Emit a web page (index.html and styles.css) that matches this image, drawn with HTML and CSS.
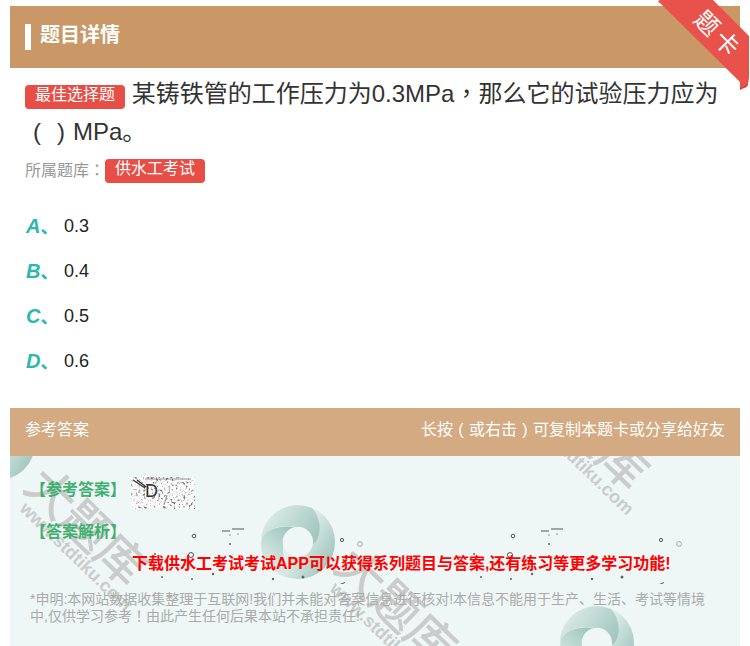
FILE: index.html
```html
<!DOCTYPE html>
<html lang="zh-CN">
<head>
<meta charset="utf-8">
<title>题目详情</title>
<link rel="stylesheet" href="styles.css">
</head>
<body>
<svg class="defs" width="0" height="0" aria-hidden="true">
  <defs>
    <linearGradient id="ringBase" x1="0" y1="0" x2="1" y2="0.6">
      <stop offset="0" stop-color="#eef7f5"/>
      <stop offset="0.55" stop-color="#e3f0ed"/>
      <stop offset="1" stop-color="#a5c9c1"/>
    </linearGradient>
    <linearGradient id="ringTop" x1="0" y1="0.2" x2="1" y2="0.7">
      <stop offset="0" stop-color="#e0eeeb"/>
      <stop offset="1" stop-color="#a2c6be"/>
    </linearGradient>
    <linearGradient id="ringLeft" x1="0.9" y1="0" x2="0.3" y2="1">
      <stop offset="0" stop-color="#9cc3ba"/>
      <stop offset="1" stop-color="#e3f1ee"/>
    </linearGradient>
    <symbol id="ring" viewBox="-38 -38 76 76">
      <path fill="url(#ringBase)" fill-rule="evenodd" d="M0-37A37 37 0 1 1 0 37A37 37 0 1 1 0-37ZM0-15A15 15 0 1 0 0 15A15 15 0 1 0 0-15Z"/>
      <path fill="url(#ringTop)" d="M-37-3A37 37 0 0 1 14-34C24-24 24-4 15 2A15 15 0 0 0-2-15C-16-18-30-14-37-3Z"/>
      <path fill="url(#ringLeft)" d="M-3-15C-18-17-31-13-36-4C-40 12-31 28-12 35C-15 28-15 16-15 3A15 15 0 0 1-3-15Z"/>
    </symbol>
    <symbol id="specks" viewBox="0 0 220 60">
      <g fill="none" stroke="#555" stroke-width="1">
        <circle cx="42" cy="12" r="1.8"/>
        <circle cx="39" cy="31" r="2.5"/>
        <circle cx="190" cy="16" r="1.6"/>
        <circle cx="208" cy="20" r="2.4" stroke="#aaa"/>
        <path d="M70 7h8M80 5h12" stroke="#555"/>
        <path d="M78 10v2M86 9v2" stroke="#999"/>
      </g>
      <g fill="#666">
        <circle cx="78" cy="20" r="1"/>
        <circle cx="3" cy="30" r="1"/>
        <circle cx="78" cy="32" r="1"/>
        <circle cx="10" cy="53" r="1"/>
        <circle cx="40" cy="55" r="1"/>
        <circle cx="61" cy="50" r="1.2"/>
        <circle cx="121" cy="55" r="1.2"/>
        <circle cx="151" cy="53" r="1.5"/>
        <path d="M188 60l5-2v1l-4 2z"/>
      </g>
    </symbol>
    <filter id="grain" x="0" y="0" width="100%" height="100%">
      <feTurbulence type="fractalNoise" baseFrequency="0.4" numOctaves="2" seed="7"/>
      <feColorMatrix type="matrix" values="0 0 0 0 0.2  0 0 0 0 0.2  0 0 0 0 0.2  3.2 3.2 0 0 -3.4"/>
    </filter>
  </defs>
</svg>

<main class="page">
  <section class="detail">
    <header class="detail-head">
      <span class="head-bar"></span>
      <h1 class="head-title">题目详情</h1>
    </header>
    <div class="question">
      <p class="question-text"><span class="tag tag-inline">最佳选择题</span> 某铸铁管的工作压力为0.3MPa<span class="punct" lang="zh-TW">，</span>那么它的试验压力应为<span class="paren">(</span><span class="paren">)</span>MPa。</p>
      <p class="bank"><span class="bank-label">所属题库<span class="punct" lang="zh-TW">：</span></span><span class="tag tag-bank">供水工考试</span></p>
    </div>
    <ul class="options">
      <li class="option"><b class="option-key">A<span class="option-mark">、</span></b><span>0.3</span></li>
      <li class="option"><b class="option-key">B<span class="option-mark">、</span></b><span>0.4</span></li>
      <li class="option"><b class="option-key">C<span class="option-mark">、</span></b><span>0.5</span></li>
      <li class="option"><b class="option-key">D<span class="option-mark">、</span></b><span>0.6</span></li>
    </ul>
  </section>

  <section class="answer">
    <div class="answer-head">
      <span>参考答案</span>
      <span>长按<span class="paren">(</span>或右击<span class="paren">)</span>可复制本题卡或分享给好友</span>
    </div>
    <div class="answer-panel">
      <svg class="ring ring-a"><use href="#ring"/></svg>
      <svg class="ring ring-b"><use href="#ring"/></svg>
      <svg class="ring ring-c"><use href="#ring"/></svg>
      <svg class="specks specks-a"><use href="#specks"/></svg>
      <svg class="specks specks-b"><use href="#specks"/></svg>
      <div class="mark mark-a"><div class="mark-big">大题库</div><div class="mark-url">www.stdtiku.com</div></div>
      <div class="mark mark-b"><div class="mark-big">大题库</div><div class="mark-url">www.stdtiku.com</div></div>
      <div class="mark mark-c"><div class="mark-big">大题库</div><div class="mark-url">www.stdtiku.com</div></div>

      <div class="answer-content">
        <div class="answer-row">
          <strong class="answer-label answer-label-first">【参考答案】</strong>
          <div class="answer-value">
            <svg class="answer-grain" width="64" height="32" viewBox="0 0 64 32" aria-hidden="true">
              <rect width="64" height="32" fill="#fafafa"/>
              <rect width="64" height="32" filter="url(#grain)"/>
              <path d="M2 3L14 11M6 3L15 10" stroke="#333" stroke-width="1.2"/>
              <path d="M36 18L33 28M14 2H60" stroke="#666" stroke-width="0.7"/>
            </svg>
            <span class="answer-letter">D</span>
          </div>
        </div>
        <strong class="answer-label answer-label-second">【答案解析】</strong>
        <p class="promo">下载供水工考试考试APP可以获得系列题目与答案,还有练习等更多学习功能!</p>
        <p class="notice">*申明:本网站数据收集整理于互联网!我们并未能对答案信息进行核对!本信息不能用于生产、生活、考试等情境中,仅供学习参考<span class="punct" lang="zh-TW">！</span>由此产生任何后果本站不承担责任!</p>
      </div>
    </div>
  </section>
</main>

<div class="ribbon">
  <svg class="ribbon-shape" width="92" height="90" viewBox="0 0 92 90" aria-hidden="true">
    <path d="M0 2L4 0H14L10 6Z" fill="#bd3a32"/>
    <path d="M82 60H90V84Q90 87 86 88L82 90Z" fill="#c9433b"/>
    <path d="M0 1Q1 0 3 0H55L91 36V78Q91 86 82 88V82Z" fill="#e8524a"/>
  </svg>
  <span class="ribbon-text">题卡</span>
</div>
</body>
</html>
```

FILE: styles.css
```css
* { box-sizing: border-box; }
html, body { margin: 0; padding: 0; }
body {
  width: 750px;
  height: 646px;
  overflow: hidden;
  position: relative;
  background: #fff;
  font-family: "Liberation Sans", "Noto Sans CJK SC", sans-serif;
  color: #333;
}
.defs { position: absolute; }
.page { padding: 6px 10px 0; }
.detail-head {
  height: 62px;
  background: #c99866;
  display: flex;
  align-items: center;
  padding-left: 15px;
  gap: 9px;
}
.head-bar { width: 6px; height: 26px; background: #fff; }
.head-title { margin: 0 0 4px; font-size: 20px; line-height: 26px; font-weight: 700; color: #fff; }
.question { padding: 7px 15px 0; }
.question-text { margin: 0; font-size: 24px; line-height: 38px; color: #333; }
.punct { font-family: "Noto Sans CJK TC", sans-serif; line-height: 1; }
.paren { display: inline-block; width: 1em; text-align: center; }
.tag {
  display: inline-block;
  width: 100px;
  height: 24px;
  border-radius: 4px;
  background: #e64e46;
  color: #fff;
  font-size: 16px;
  line-height: 20px;
  text-align: center;
}
.tag-inline { vertical-align: 2px; }
.bank { margin: 8px 0 0; display: flex; align-items: center; height: 24px; }
.bank-label { flex: none; white-space: nowrap; font-size: 16px; color: #999; width: 80px; margin-top: -5px; }
.options { list-style: none; margin: 21px 0 0; padding: 0 16px 22px; }
.option {
  height: 45px;
  display: flex;
  align-items: center;
  font-size: 18px;
  color: #222;
}
.option-key {
  width: 38px;
  margin-bottom: 4px;
  font-size: 20px;
  font-style: italic;
  font-weight: 700;
  color: #2db7ae;
}
.option-mark { font-style: normal; font-size: 18px; }
.answer { margin-top: 2px; }
.answer-head {
  height: 48px;
  background: #d4aa82;
  color: #fff;
  font-size: 16px;
  display: flex;
  align-items: center;
  justify-content: space-between;
  padding: 0 15px 8px;
}
.answer-panel {
  position: relative;
  height: 190px;
  overflow: hidden;
  background: #eef7f6;
}
.answer-content { position: relative; padding: 21px 20px 0; }
.answer-row { display: flex; align-items: center; gap: 5px; height: 32px; }
.answer-label { font-size: 16px; line-height: 22px; font-weight: 700; color: #3fb06f; }
.answer-label-first { padding-bottom: 6px; line-height: 16px; }
.answer-label-second { display: block; margin-top: 12px; }
.answer-value { position: relative; width: 64px; height: 32px; }
.answer-grain { display: block; }
.answer-letter {
  position: absolute;
  top: 3px;
  left: 14px;
  font-size: 18px;
  line-height: 22px;
  color: #333;
}
.promo {
  margin: 10px 0 0 102px;
  font-size: 16px;
  line-height: 22px;
  font-weight: 700;
  color: #f00;
  white-space: nowrap;
}
.notice {
  margin: 16px 0 0;
  width: 680px;
  font-size: 14px;
  line-height: 17px;
  color: #aaa;
}
.ring { position: absolute; width: 76px; height: 76px; }
.ring-a { left: -50px; top: -51px; }
.ring-b { left: 250px; top: 48px; }
.ring-c { left: 549px; top: 149px; }
.specks { position: absolute; width: 220px; height: 60px; top: 68px; }
.specks-a { left: 142px; }
.specks-b { left: 461px; }
.mark {
  position: absolute;
  width: 240px;
  transform: rotate(44deg);
  transform-origin: 0 0;
  color: #c9cccb;
  white-space: nowrap;
}
.mark-a { left: 41px; top: 3px; }
.mark-b { left: 351px; top: 83px; }
.mark-c { left: 543px; top: -93px; }
.mark-big { font-size: 48px; line-height: 50px; font-weight: 400; -webkit-text-stroke: 0.8px #c9cccb; }
.mark-url { margin: -8px 0 0 12px; font-size: 18px; line-height: 22px; font-weight: 700; }
.ribbon { position: absolute; top: 0; left: 658px; width: 92px; height: 90px; }
.ribbon-shape { display: block; }
.ribbon-text {
  position: absolute;
  left: 29px;
  top: 20px;
  width: 62px;
  text-align: center;
  font-size: 24px;
  line-height: 30px;
  letter-spacing: 4px;
  color: #fff;
  transform: rotate(45deg);
  white-space: nowrap;
}
```
